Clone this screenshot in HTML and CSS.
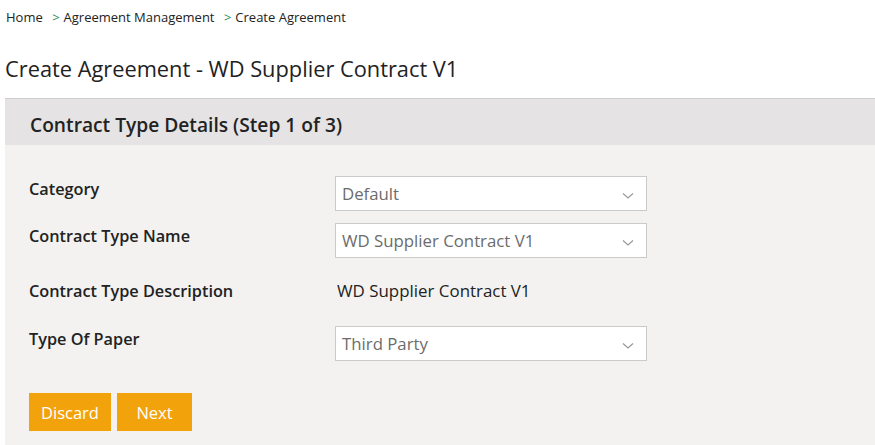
FILE: index.html
```html
<!DOCTYPE html>
<html>
<head>
<meta charset="utf-8">
<link rel="stylesheet" href="styles.css">
</head>
<body>
<nav class="crumbs">
  <span class="crumb">Home</span>
  <span class="sep">&gt;</span><span class="crumb">Agreement Management</span>
  <span class="sep">&gt;</span><span class="crumb">Create Agreement</span>
</nav>
<h1 class="title">Create Agreement - WD Supplier Contract V1</h1>
<section class="panel">
  <header class="panel-head">Contract Type Details (Step 1 of 3)</header>
  <div class="panel-body">
    <div class="row">
      <div class="label">Category</div>
      <div class="select"><span>Default</span><svg class="chev" viewBox="0 0 12 8" width="12" height="8"><path d="M1 1.5 L6 6 L11 1.5" fill="none" stroke="#999" stroke-width="1.2"/></svg></div>
    </div>
    <div class="row">
      <div class="label">Contract Type Name</div>
      <div class="select"><span>WD Supplier Contract V1</span><svg class="chev" viewBox="0 0 12 8" width="12" height="8"><path d="M1 1.5 L6 6 L11 1.5" fill="none" stroke="#999" stroke-width="1.2"/></svg></div>
    </div>
    <div class="row row-text">
      <div class="label">Contract Type Description</div>
      <div class="value">WD Supplier Contract V1</div>
    </div>
    <div class="row">
      <div class="label">Type Of Paper</div>
      <div class="select"><span>Third Party</span><svg class="chev" viewBox="0 0 12 8" width="12" height="8"><path d="M1 1.5 L6 6 L11 1.5" fill="none" stroke="#999" stroke-width="1.2"/></svg></div>
    </div>
    <div class="actions">
      <button class="btn btn-discard">Discard</button>
      <button class="btn btn-next">Next</button>
    </div>
  </div>
</section>
</body>
</html>
```
FILE: styles.css
```css
html, body {
  margin: 0;
  padding: 0;
  background: #ffffff;
}
body {
  font-family: "Open Sans", "Noto Sans", sans-serif;
  color: #222;
  padding: 0 0 0 5px;
}
.crumbs {
  font-size: 13px;
  height: 35px;
  line-height: 35px;
  padding-left: 1px;
  color: #222;
}
.crumb { color: #222; }
.sep {
  color: #2e8b57;
  margin: 0 4px 0 6px;
}
.title {
  font-size: 21.8px;
  font-weight: 400;
  margin: 0;
  height: 63px;
  line-height: 67px;
  color: #222;
}
.panel {
  border-top: 1px solid #cfcfcf;
}
.panel-head {
  background: #e5e3e3;
  height: 46px;
  line-height: 52px;
  padding-left: 25px;
  font-size: 19.2px;
  font-weight: 600;
  color: #222;
}
.panel-body {
  background: #f3f2f1;
  padding: 31px 0 20px 24px;
}
.row {
  display: flex;
  align-items: flex-start;
  height: 47px;
}
.row-text {
  height: 56px;
  padding-top: 9px;
  box-sizing: border-box;
}
.label {
  width: 306px;
  font-size: 16.3px;
  font-weight: 600;
  color: #222;
  line-height: 24px;
  padding-top: 1px;
}
.row-text .label { padding-top: 0; }
.select {
  width: 292px;
  height: 33px;
  background: #fff;
  border: 1px solid #cacaca;
  display: flex;
  align-items: center;
  justify-content: space-between;
  padding: 0 12px 0 6px;
  box-sizing: content-box;
  font-size: 16.8px;
  color: #6c6c6c;
}
.chev { margin-top: 4px; }
.value {
  font-size: 16.9px;
  color: #222;
  line-height: 24px;
  padding-left: 2px;
}
.actions {
  display: flex;
  gap: 6px;
  margin-top: 20px;
}
.btn {
  background: #f2a30c;
  border: none;
  color: #fff;
  font-family: inherit;
  font-size: 16.5px;
  height: 38px;
  padding: 0;
  cursor: pointer;
}
.btn-discard { width: 82px; }
.btn-next { width: 75px; }
```
